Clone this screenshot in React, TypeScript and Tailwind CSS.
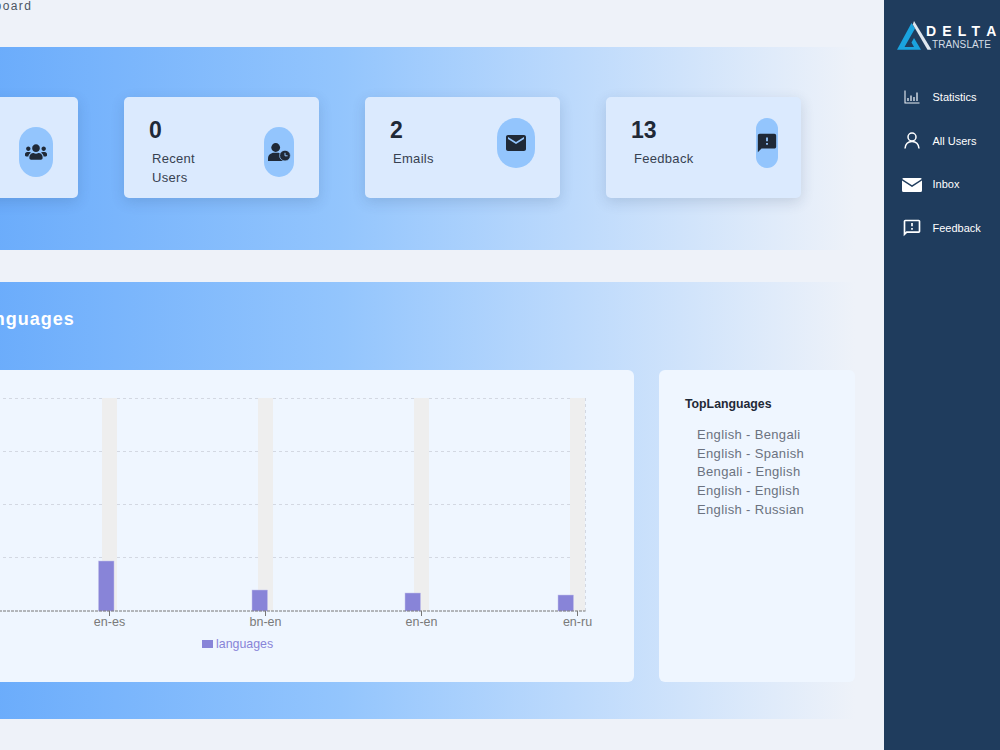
import React from "react";
import { FaUsers } from "react-icons/fa";
import { MdEmail, MdFeedback, MdOutlineFeedback } from "react-icons/md";

function UserClock() {
  return (
    <svg width="23" height="18" viewBox="0 0 23 18">
      <circle cx="7.7" cy="4.5" r="4.4" fill="#1f2937" />
      <path d="M0 18 V15.5 C0 12 3 9.8 6 9.8 H9.5 C12.5 9.8 15.5 12 15.5 15.5 V18 Z" fill="#1f2937" />
      <circle cx="17" cy="12.6" r="5.4" fill="#1f2937" stroke="#93c5fd" strokeWidth="0.8" />
      <path d="M17 9.8 V12.8 H19.6" fill="none" stroke="#93c5fd" strokeWidth="1" />
    </svg>
  );
}

type Stat = { n: string; label: string[]; pill: string; pad: string; top: string; icon: React.ReactNode };

const stats: Stat[] = [
  { n: "", label: [], pill: "w-[34px]", pad: "pr-[25px]", top: "mt-[30px]", icon: <FaUsers size={22} /> },
  { n: "0", label: ["Recent", "Users"], pill: "w-[30px]", pad: "pr-[25px]", top: "mt-[30px]", icon: <UserClock /> },
  { n: "2", label: ["Emails"], pill: "w-[38px]", pad: "pr-[25px]", top: "mt-[21px]", icon: <MdEmail size={24} /> },
  { n: "13", label: ["Feedback"], pill: "w-[22px]", pad: "pr-[23px]", top: "mt-[21px]", icon: <MdFeedback size={22} /> },
];

function StatCard({ n, label, pill, pad, top, icon }: Stat) {
  return (
    <div className={`w-[195px] h-[101px] shrink-0 rounded-[5px] bg-[#dbeafe] shadow-[0_4px_14px_rgba(30,58,95,0.16)] flex justify-between pl-[25px] ${pad}`}>
      <div className="pt-[19px]">
        <div className="text-[23px] leading-[28px] font-bold text-[#1f2937]">{n}</div>
        <div className="mt-[5px] pl-[3px] text-[13px] leading-[19px] tracking-[0.3px] text-[#374151]">
          {label.map((l) => (
            <div key={l}>{l}</div>
          ))}
        </div>
      </div>
      <div className={`${pill} ${top} h-[50px] rounded-full bg-[#93c5fd] flex items-center justify-center text-[#1f2937]`}>
        {icon}
      </div>
    </div>
  );
}

function Chart() {
  const X = 117;
  const Y = 370;
  const grid = [398, 451, 504, 557];
  const bands = [102, 258, 414, 570];
  const bars = [
    { x: 98.5, top: 561 },
    { x: 252, top: 590 },
    { x: 405, top: 593 },
    { x: 558, top: 595 },
  ];
  const labels = [
    { t: "en-es", x: 109.5 },
    { t: "bn-en", x: 265.5 },
    { t: "en-en", x: 421.5 },
    { t: "en-ru", x: 577.5 },
  ];
  return (
    <svg width="751" height="312" viewBox="0 0 751 312" className="block">
      {grid.map((g) => (
        <line key={g} x1={0} x2={585.5 + X} y1={g - Y + 0.5} y2={g - Y + 0.5} stroke="#d3d8e2" strokeDasharray="3 3" />
      ))}
      <line x1={585.5 + X} x2={585.5 + X} y1={398 - Y} y2={611 - Y} stroke="#d3d8e2" strokeDasharray="3 3" />
      {bands.map((b) => (
        <rect key={b} x={b + X} y={398 - Y} width={15} height={213} fill="#eeeeee" />
      ))}
      {bars.map((b) => (
        <rect key={b.x} x={b.x + X} y={b.top - Y} width={15.5} height={611 - b.top} fill="#8884d8" stroke="#c4c2ec" strokeWidth="0.5" />
      ))}
      <line x1={0} x2={585.5 + X} y1={611 - Y} y2={611 - Y} stroke="#777777" strokeDasharray="3 1" />
      {labels.map((l) => (
        <g key={l.t}>
          <line x1={l.x + X} x2={l.x + X} y1={611 - Y} y2={616 - Y} stroke="#777777" />
          <text x={l.x + X} y={626 - Y} textAnchor="middle" fontSize="12.5" fill="#7a7a7a" fontFamily="'Liberation Sans', sans-serif">
            {l.t}
          </text>
        </g>
      ))}
      <rect x={202 + X} y={640 - Y} width={11} height={8} fill="#8884d8" />
      <text x={216 + X} y={647.5 - Y} fontSize="12.4" fill="#8884d8" fontFamily="'Liberation Sans', sans-serif">
        languages
      </text>
    </svg>
  );
}

function Logo() {
  return (
    <svg width="36" height="31" viewBox="0 0 36 31" className="shrink-0">
      <path d="M14.5 3 L18 8.5 L7.5 27 L17 27 L14.5 22.5 L17 18 L24 29.8 L0 29.8 Z" fill="#1aa3df" />
      <path d="M17 1 L34.5 29.8 L30.5 29.8 L15.8 4.5 Z" fill="#dfe7ef" />
    </svg>
  );
}

const nav = [
  {
    t: "Statistics",
    i: (
      <svg width="16" height="14" viewBox="0 0 16 14" fill="none" stroke="#e8edf3" strokeWidth="1.1">
        <path d="M1 0.5 V13 H15.5" />
        <path d="M4 11 V8 M7 11 V5.5 M10 11 V7 M13 11 V2.5" strokeWidth="1.3" />
      </svg>
    ),
  },
  {
    t: "All Users",
    i: (
      <svg width="16" height="17" viewBox="0 0 16 17" fill="none" stroke="#ffffff" strokeWidth="1.5">
        <circle cx="8" cy="5" r="4" />
        <path d="M1 16.5 C1.5 11.5 4.5 9.5 8 9.5 C11.5 9.5 14.5 11.5 15 16.5" />
      </svg>
    ),
  },
  {
    t: "Inbox",
    i: (
      <svg width="20" height="14" viewBox="0 0 20 14" fill="#ffffff">
        <path d="M1.5 0 H18.5 Q19.5 0 19.7 1 L10 7.2 L0.3 1 Q0.5 0 1.5 0 Z" />
        <path d="M0 2.6 L10 9 L20 2.6 V12.5 Q20 14 18.5 14 H1.5 Q0 14 0 12.5 Z" />
      </svg>
    ),
  },
  { t: "Feedback", i: <MdOutlineFeedback size={20} color="#ffffff" /> },
];

export default function App() {
  return (
    <div className="w-[1000px] h-[750px] overflow-hidden flex bg-[#eef2f9] font-['Liberation_Sans',Arial,sans-serif]">
      <main className="w-[884px] shrink-0 h-full overflow-hidden">
        <div className="w-[1026px] -ml-[171px]">
          <div className="h-[47px] pl-[132px] text-[12px] leading-[12px] tracking-[1.4px] text-[#4b5563]">Dashboard</div>
          <section className="h-[203px] px-[54px] pt-[50px] flex justify-between bg-gradient-to-r from-[#57a0fa] via-[#93c5fd] via-50% to-[#eef2f9]">
            {stats.map((s, i) => (
              <StatCard key={i} {...s} />
            ))}
          </section>
          <section className="mt-[32px] h-[437px] pl-[54px] pt-[27px] bg-gradient-to-r from-[#57a0fa] via-[#93c5fd] via-50% to-[#eef2f9]">
            <h2 className="text-[18px] leading-[20px] font-bold tracking-[1px] text-white pl-[47px]">Top Languages</h2>
            <div className="mt-[41px] flex gap-[25px] h-[312px]">
              <div className="w-[751px] rounded-[6px] bg-[#eff6ff]">
                <Chart />
              </div>
              <div className="w-[196px] rounded-[6px] bg-[#eff6ff] pl-[26px] pt-[26px]">
                <div className="text-[12.3px] leading-[16px] font-bold text-[#1f2937]">TopLanguages</div>
                <ul className="mt-[14px] pl-[12px] text-[13px] leading-[18.7px] tracking-[0.35px] text-[#6b7280]">
                  <li>English - Bengali</li>
                  <li>English - Spanish</li>
                  <li>Bengali - English</li>
                  <li>English - English</li>
                  <li>English - Russian</li>
                </ul>
              </div>
            </div>
          </section>
        </div>
      </main>
      <aside className="w-[116px] shrink-0 h-full bg-[#1f3c5d] text-white">
        <div className="flex items-start pt-[20px] pl-[13px] h-[75.4px]">
          <Logo />
          <div className="-ml-[7px] mt-[3px]">
            <div className="text-[14px] leading-[16px] font-bold">
              <span className="tracking-[6.2px]">DELT</span>A
            </div>
            <div className="text-[10px] leading-[10px] tracking-[0.1px] text-[#d5dde6] mt-[1px] pl-[6px]">TRANSLATE</div>
          </div>
        </div>
        <nav className="flex flex-col pl-[1px]">
          {nav.map((n) => (
            <div key={n.t} className="h-[43.7px] flex items-center">
              <div className="w-[47.5px] flex justify-center pl-[6px]">{n.i}</div>
              <span className="text-[11px] text-white">{n.t}</span>
            </div>
          ))}
        </nav>
      </aside>
    </div>
  );
}
